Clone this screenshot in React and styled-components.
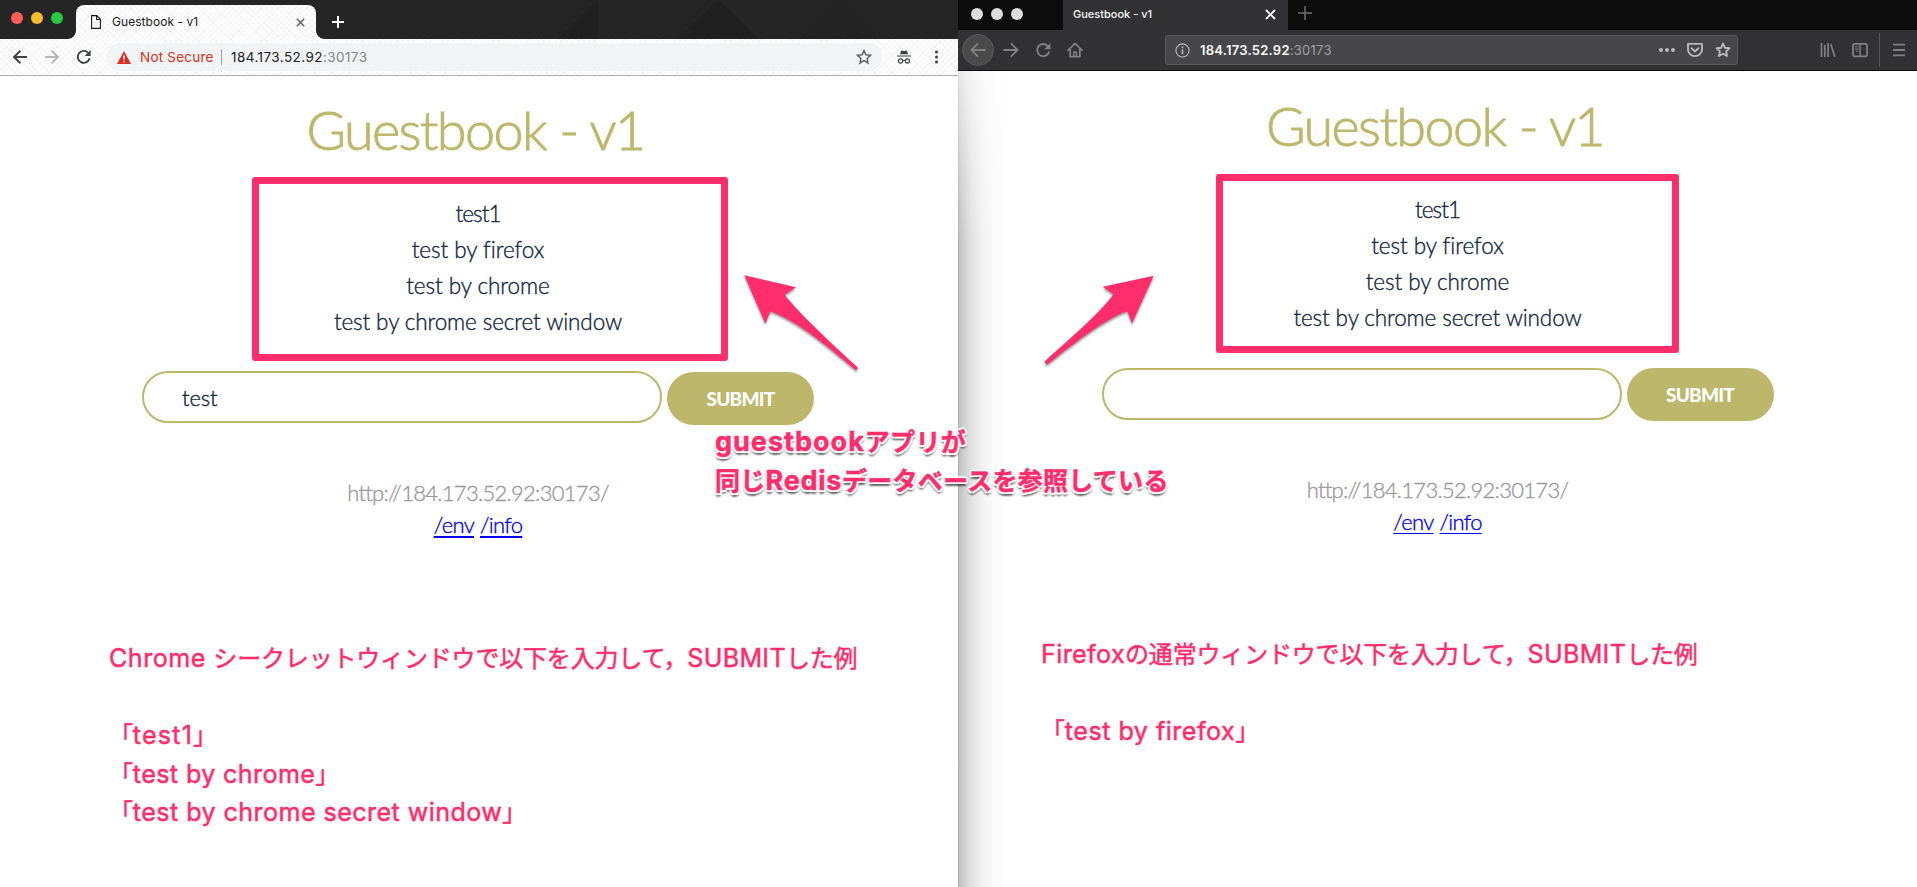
import React from 'react';
import styled, { createGlobalStyle } from 'styled-components';

const PINK = '#ff2d6c';
const OLIVE = '#bdb76b';
const UI = 'Inter, Roboto, "Liberation Sans", sans-serif';
const BODY = 'Lato, "Open Sans", sans-serif';
const JP = 'Inter, "Noto Sans CJK JP", sans-serif';

const GlobalStyle = createGlobalStyle`
  * { box-sizing: border-box; }
  body { margin: 0; background: #fff; overflow: hidden; }
`;

/* ---------- desktop ---------- */

const Desktop = styled.main`
  position: relative;
  display: flex;
  width: 1917px;
  height: 887px;
  overflow: hidden;
`;

const ChromeWindow = styled.section`
  display: flex;
  flex-direction: column;
  width: 958px;
  background: #fff;
`;

const FirefoxWindow = styled.section`
  display: flex;
  flex-direction: column;
  width: 959px;
  background: #fff;
`;

const Icon = styled.svg`
  display: block;
  flex: none;
  fill: none;
  stroke: currentColor;
  color: ${(p) => p.$color || 'inherit'};
`;

const Light = styled.i`
  width: 12px;
  height: 12px;
  border-radius: 50%;
  background: ${(p) => p.$color};
`;

/* ---------- Chrome ---------- */

const hatch = `
  repeating-linear-gradient(45deg, rgba(0,0,0,.035) 0 1px, transparent 1px 4px),
  repeating-linear-gradient(-45deg, rgba(0,0,0,.035) 0 1px, transparent 1px 4px),
  #fff`;

const ChromeTabStrip = styled.header`
  position: relative;
  display: flex;
  height: 39px;
  padding-left: 11px;
  background: #252525;
`;

const StripFacets = styled.svg`
  position: absolute;
  left: 480px;
  top: 0;
`;

const ChromeLights = styled.div`
  display: flex;
  gap: 8px;
  width: 65px;
  padding-top: 12px;
`;

const ChromeTab = styled.div`
  position: relative;
  display: flex;
  align-items: center;
  width: 240px;
  height: 34px;
  margin-top: 5px;
  padding: 0 11px 0 15px;
  border-radius: 8px 8px 0 0;
  background: ${hatch};
  color: #1b1b1c;
  font: 400 12px/16px ${UI};
  letter-spacing: 0.05px;

  &::before,
  &::after {
    content: '';
    position: absolute;
    bottom: 0;
    width: 8px;
    height: 8px;
  }
  &::before {
    left: -8px;
    background: radial-gradient(circle at 0 0, transparent 7.5px, #fafafa 8px);
  }
  &::after {
    right: -8px;
    background: radial-gradient(circle at 100% 0, transparent 7.5px, #fafafa 8px);
  }
`;

const TabTitle = styled.span`
  flex: 1;
  margin-left: ${(p) => p.$gap || 0}px;
  white-space: nowrap;
`;

const ChromeNewTab = styled.div`
  margin: 16px 0 0 16px;
  color: #fff;
`;

const ChromeToolbar = styled.div`
  display: flex;
  align-items: center;
  height: 37px;
  padding-left: 12px;
  border-bottom: 1px solid #aeaeae;
  background: ${hatch};
  color: #3c4043;
`;

const ChromeNav = styled.div`
  display: flex;
  gap: 16px;
  width: 94px;
`;

const Omnibox = styled.div`
  display: flex;
  align-items: center;
  width: 776px;
  height: 28px;
  padding: 0 10px 0 11px;
  border-radius: 14px;
  background: #f1f3f4;
  color: #202124;
  font: 400 13.5px/28px ${UI};
`;

const NotSecure = styled.span`
  width: 81px;
  margin-left: 9px;
  color: #d93025;
  letter-spacing: 0.22px;
`;

const Divider = styled.i`
  width: 1px;
  height: ${(p) => p.$h}px;
  background: ${(p) => p.$color};
`;

const Address = styled.span`
  flex: 1;
  margin-left: ${(p) => p.$gap}px;
  letter-spacing: ${(p) => p.$track}px;
  font-weight: ${(p) => p.$weight || 400};
`;

const Port = styled.span`
  color: ${(p) => p.$color};
  font-weight: 400;
`;

const ChromeActions = styled.div`
  display: flex;
  align-items: center;
  gap: 20px;
  margin-left: 15px;
`;

/* ---------- Firefox ---------- */

const FirefoxTabStrip = styled.header`
  display: flex;
  height: 30px;
  background: #0c0c0d;
`;

const FirefoxLights = styled.div`
  display: flex;
  gap: 8px;
  width: 105px;
  padding: 8px 0 0 13px;
`;

const FirefoxTab = styled.div`
  display: flex;
  align-items: center;
  width: 225px;
  padding: 0 12px 2px 10px;
  background: #323234;
  color: #f9f9fa;
  font: 500 11px/16px ${UI};
`;

const FirefoxNewTab = styled.div`
  padding: 6px 0 0 10px;
  color: #6f6f70;
`;

const FirefoxToolbar = styled.div`
  display: flex;
  align-items: center;
  height: 41px;
  padding-left: 4px;
  border-bottom: 1px solid #0c0c0d;
  background: #323234;
  color: #818182;
`;

const FirefoxNav = styled.div`
  display: flex;
  align-items: center;
  flex: none;
  gap: 16px;
  width: 203px;
`;

const BackButton = styled.div`
  display: flex;
  align-items: center;
  justify-content: center;
  width: 32px;
  height: 32px;
  margin-right: -7px;
  border: 1px solid #5a5a5b;
  border-radius: 50%;
  background: #4a4a4b;
`;

const UrlBar = styled.div`
  display: flex;
  align-items: center;
  flex: none;
  width: 573px;
  height: 30px;
  padding: 0 6px 0 9px;
  border: 1px solid #5b5b5d;
  border-radius: 3px;
  background: #474749;
  color: #f9f9fa;
  font: 600 13px/28px ${UI};
`;

const UrlActions = styled.div`
  display: flex;
  align-items: center;
  gap: 12px;
  color: #b9b9ba;
`;

const FirefoxTools = styled.div`
  display: flex;
  align-items: center;
  flex: none;
  gap: 16px;
  width: 141px;
  padding-left: 82px;
`;

/* ---------- Guestbook page ---------- */

const Page = styled.article`
  flex: 1;
  display: flex;
  flex-direction: column;
  align-items: center;
  padding-top: ${(p) => p.$top}px;
  padding-right: ${(p) => (p.$shaded ? 0 : 2)}px;
  background: ${(p) =>
    p.$shaded
      ? `linear-gradient(180deg, rgba(255,255,255,.6) 0, rgba(255,255,255,0) 170px) 0 0 / 48px 100% no-repeat,
         linear-gradient(90deg, #a6a6a6 0, #bfbfbf 1px, #d0d0d0 6px, #e3e3e3 14px, #f1f1f1 24px, #fafafa 35px, #fff 48px)`
      : '#fff'};
  color: #12263a;
  font: 300 22.5px/36px ${BODY};
`;

const Title = styled.h1`
  margin: 0 5px 0 0;
  color: ${OLIVE};
  font: 300 54px/65px ${BODY};
  letter-spacing: -1.6px;
  -webkit-text-stroke: 0.9px ${OLIVE};
`;

const Entries = styled.ul`
  display: flex;
  flex-direction: column;
  align-items: center;
  margin: ${(p) => p.$top}px 0 ${(p) => p.$bottom}px;
  padding: 0;
  list-style: none;
  -webkit-text-stroke: 0.35px #12263a;
`;

const Entry = styled.li`
  letter-spacing: ${(p) => p.$track}px;
`;

const Form = styled.div`
  display: flex;
  align-items: flex-start;
  gap: 5px;
  height: 54px;
`;

const Field = styled.div`
  width: 520px;
  height: 52px;
  padding-left: 38px;
  border: 2px solid ${OLIVE};
  border-radius: 26px;
  font-size: 22px;
  line-height: 49px;
  letter-spacing: -0.1px;
  -webkit-text-stroke: 0.4px #12263a;
`;

const Submit = styled.div`
  width: 147px;
  height: 53px;
  margin-top: ${(p) => p.$drop}px;
  border-radius: 27px;
  background: ${OLIVE};
  color: #fff;
  font: 900 19px/53px ${BODY};
  letter-spacing: -0.76px;
  text-align: center;
`;

const Host = styled.p`
  margin: 52px 0 0;
  color: #999;
  font-size: 22px;
  line-height: 32px;
  letter-spacing: -0.7px;
  -webkit-text-stroke: 0.35px #999;
`;

const Links = styled.nav`
  display: flex;
  gap: 6px;
  font-size: 22px;
  line-height: 32px;
`;

const PageLink = styled.span`
  color: #0000ee;
  letter-spacing: -0.7px;
  text-decoration: underline;
  text-decoration-thickness: ${(p) => p.$line}px;
  text-underline-offset: 3px;
  text-decoration-skip-ink: none;
  -webkit-text-stroke: 0.35px #0000ee;
`;

const Notes = styled.div`
  align-self: flex-start;
  margin: ${(p) => p.$top}px 0 0 ${(p) => p.$left}px;
  color: ${PINK};
  font: 400 24px/38.6px ${JP};
  letter-spacing: -0.18px;
  white-space: pre;
  -webkit-text-stroke: 0.5px ${PINK};
`;

const Line = styled.div`
  height: 1lh;
`;

const Latin = styled.span`
  font-size: 1.045em;
  letter-spacing: ${(p) => p.$track}px;
`;

/* ---------- annotations drawn over both windows ---------- */

const Highlight = styled.div`
  position: absolute;
  left: ${(p) => p.$x}px;
  top: ${(p) => p.$y}px;
  width: ${(p) => p.$w}px;
  height: ${(p) => p.$h}px;
  border: 7px solid ${PINK};
  border-radius: 3px;
`;

const Arrows = styled.svg`
  position: absolute;
  left: 740px;
  top: 270px;
  filter: drop-shadow(0 2px 1px rgba(0, 0, 0, 0.4));
`;

const Callout = styled.div`
  position: absolute;
  left: 715px;
  top: 422px;
  color: ${PINK};
  font: 700 25px/39.3px ${JP};
  letter-spacing: 0.28px;
  white-space: pre;
  -webkit-text-stroke: 0.5px ${PINK};
  text-shadow:
    2px 0 #fff, -2px 0 #fff, 0 2px #fff, 0 -2px #fff,
    1.5px 1.5px #fff, -1.5px 1.5px #fff, 1.5px -1.5px #fff, -1.5px -1.5px #fff,
    0 4px 2px rgba(0, 0, 0, 0.5), 2px 3px 2px rgba(0, 0, 0, 0.2), -2px 3px 2px rgba(0, 0, 0, 0.2);

  ${Latin} {
    font-size: 27px;
  }
`;

const entries = [
  ['test1', -0.9],
  ['test by firefox', -0.05],
  ['test by chrome', -0.07],
  ['test by chrome secret window', -0.12],
];

function Guestbook({ top, listTop, listBottom, drop, value, line, shaded, children }) {
  return (
    <Page $top={top} $shaded={shaded}>
      <Title>Guestbook - v1</Title>
      <Entries $top={listTop} $bottom={listBottom}>
        {entries.map(([text, track]) => (
          <Entry key={text} $track={track}>{text}</Entry>
        ))}
      </Entries>
      <Form>
        <Field>{value}</Field>
        <Submit $drop={drop}>SUBMIT</Submit>
      </Form>
      <Host>http://184.173.52.92:30173/</Host>
      <Links>
        <PageLink $line={line}>/env</PageLink>
        <PageLink $line={line}>/info</PageLink>
      </Links>
      {children}
    </Page>
  );
}

const STAR = 'M8 1.6l1.9 4.2 4.6.5-3.4 3.1.9 4.6L8 11.7 4 14l.9-4.6L1.5 6.3l4.6-.5z';

function ChromeBrowser() {
  return (
    <ChromeWindow>
      <ChromeTabStrip>
        <StripFacets width="478" height="39" stroke="none">
          <path d="M78 39L117 0h1v39zM197 39L238 0l40 39z" fill="#202020" />
          <path d="M320 39L360 0l40 39z" fill="#232323" />
        </StripFacets>
        <ChromeLights>
          <Light $color="#ff5f57" />
          <Light $color="#febc2e" />
          <Light $color="#28c840" />
        </ChromeLights>
        <ChromeTab>
          <Icon width="10" height="14" viewBox="0 0 10 14" $color="#1b1b1c">
            <path d="M.6.6h5.2l3.6 3.7v9.1H.6zM5.6.8v3.7h3.7" strokeWidth="1.1" />
          </Icon>
          <TabTitle $gap={11}>Guestbook - v1</TabTitle>
          <Icon width="9" height="9" viewBox="0 0 9 9" $color="#5f6368">
            <path d="M.8.8l7.4 7.4M8.2.8L.8 8.2" strokeWidth="1.5" />
          </Icon>
        </ChromeTab>
        <ChromeNewTab>
          <Icon width="12" height="12" viewBox="0 0 12 12">
            <path d="M6 0v12M0 6h12" strokeWidth="2" />
          </Icon>
        </ChromeNewTab>
      </ChromeTabStrip>

      <ChromeToolbar>
        <ChromeNav>
          <Icon width="16" height="16" viewBox="0 0 16 16">
            <path d="M15 8H2.4M8.4 1.8L2 8l6.4 6.2" strokeWidth="1.9" />
          </Icon>
          <Icon width="16" height="16" viewBox="0 0 16 16" $color="#b4b6b8">
            <path d="M1 8h12.6M7.6 1.8L14 8l-6.4 6.2" strokeWidth="1.9" />
          </Icon>
          <Icon width="16" height="16" viewBox="0 0 16 16">
            <path d="M13.6 9.2A6 6 0 1 1 12 3.6" strokeWidth="1.9" />
            <path d="M14.6 1v6H8.6z" fill="currentColor" stroke="none" />
          </Icon>
        </ChromeNav>
        <Omnibox>
          <Icon width="14" height="13" viewBox="0 0 14 13" $color="#d93025">
            <path d="M7 0l7 13H0z" fill="currentColor" stroke="none" />
            <path d="M7 4.6v4M7 9.7v1.6" stroke="#fff" strokeWidth="1.5" />
          </Icon>
          <NotSecure>Not Secure</NotSecure>
          <Divider $h={16} $color="#a0a3a6" />
          <Address $gap={9} $track={0.43}>
            184.173.52.92<Port $color="#80868b">:30173</Port>
          </Address>
          <Icon width="16" height="16" viewBox="0 0 16 16" $color="#5f6368">
            <path d={STAR} strokeWidth="1.5" />
          </Icon>
        </Omnibox>
        <ChromeActions>
          <Icon width="14" height="14" viewBox="0 0 14 14">
            <path d="M4.2.4L7 1l2.8-.6L11 4.2H3zM0 5.4h14v1.1H0z" fill="currentColor" stroke="none" />
            <circle cx="3.6" cy="11" r="2.1" strokeWidth="1.1" />
            <circle cx="10.4" cy="11" r="2.1" strokeWidth="1.1" />
            <path d="M5.6 10.6q1.4-.8 2.8 0" strokeWidth="1" />
          </Icon>
          <Icon width="14" height="16" viewBox="0 0 14 16">
            <g fill="currentColor" stroke="none">
              <circle cx="5.5" cy="3" r="1.5" />
              <circle cx="5.5" cy="8" r="1.5" />
              <circle cx="5.5" cy="13" r="1.5" />
            </g>
          </Icon>
        </ChromeActions>
      </ChromeToolbar>

      <Guestbook top={21} listTop={34} listBottom={31} drop={1} value="test" line={2}>
        <Notes $top={98} $left={109}>
          <Line>
            <Latin $track={0.5}>Chrome </Latin>シークレットウィンドウで以下を入力して，<Latin $track={0.3}>SUBMIT</Latin>した例
          </Line>
          <Line />
          <Line>「<Latin $track={1.2}>test1</Latin>」</Line>
          <Line>「<Latin $track={0.4}>test by chrome</Latin>」</Line>
          <Line>「<Latin $track={0.45}>test by chrome secret window</Latin>」</Line>
        </Notes>
      </Guestbook>
    </ChromeWindow>
  );
}

function FirefoxBrowser() {
  return (
    <FirefoxWindow>
      <FirefoxTabStrip>
        <FirefoxLights>
          <Light $color="#dcdcdc" />
          <Light $color="#dcdcdc" />
          <Light $color="#dcdcdc" />
        </FirefoxLights>
        <FirefoxTab>
          <TabTitle>Guestbook - v1</TabTitle>
          <Icon width="11" height="11" viewBox="0 0 11 11">
            <path d="M1 1l9 9M10 1l-9 9" strokeWidth="1.8" />
          </Icon>
        </FirefoxTab>
        <FirefoxNewTab>
          <Icon width="14" height="14" viewBox="0 0 14 14">
            <path d="M7 0v14M0 7h14" strokeWidth="1.5" />
          </Icon>
        </FirefoxNewTab>
      </FirefoxTabStrip>

      <FirefoxToolbar>
        <FirefoxNav>
          <BackButton>
            <Icon width="16" height="16" viewBox="0 0 16 16">
              <path d="M15 8H1.6M7.6 1.8L1.4 8l6.2 6.2" strokeWidth="1.8" strokeLinecap="round" strokeLinejoin="round" />
            </Icon>
          </BackButton>
          <Icon width="16" height="16" viewBox="0 0 16 16">
            <path d="M1 8h13.4M8.4 1.8L14.6 8l-6.2 6.2" strokeWidth="1.8" strokeLinecap="round" strokeLinejoin="round" />
          </Icon>
          <Icon width="16" height="16" viewBox="0 0 16 16">
            <path d="M14 10.2A6.1 6.1 0 1 1 12.6 3.8" strokeWidth="1.9" strokeLinecap="round" />
            <path d="M15.4 1v6.2H9.2z" fill="currentColor" stroke="none" />
          </Icon>
          <Icon width="16" height="16" viewBox="0 0 16 16">
            <path d="M1 8.4L8 1.4l7 7M3.2 7.5v7.2h9.6V7.5" strokeWidth="1.8" strokeLinecap="round" strokeLinejoin="round" />
            <path d="M6.8 14V10h2.6v4" strokeWidth="1.5" />
          </Icon>
        </FirefoxNav>
        <UrlBar>
          <Icon width="15" height="15" viewBox="0 0 15 15" $color="#b9b9ba">
            <circle cx="7.5" cy="7.5" r="6.6" strokeWidth="1.1" />
            <path d="M7.5 6.4v4.8M7.5 3.6v1.7" strokeWidth="1.6" />
          </Icon>
          <Address $gap={10} $track={0.25} $weight={600}>
            184.173.52.92<Port $color="#a0a0a2">:30173</Port>
          </Address>
          <UrlActions>
            <Icon width="16" height="16" viewBox="0 0 16 16">
              <g fill="currentColor" stroke="none">
                <circle cx="2" cy="8" r="2" />
                <circle cx="8" cy="8" r="2" />
                <circle cx="14" cy="8" r="2" />
              </g>
            </Icon>
            <Icon width="16" height="16" viewBox="0 0 16 16">
              <path d="M1 1.9h14v5.6a7 6.6 0 0 1-14 0z" strokeWidth="1.9" strokeLinejoin="round" />
              <path d="M4.6 6.2L8 9.4l3.4-3.2" strokeWidth="1.9" strokeLinecap="round" />
            </Icon>
            <Icon width="16" height="16" viewBox="0 0 16 16">
              <path d={STAR} strokeWidth="1.9" strokeLinejoin="round" />
            </Icon>
          </UrlActions>
        </UrlBar>
        <FirefoxTools>
          <Icon width="16" height="16" viewBox="0 0 16 16">
            <path d="M1.5 1v14M4.8 3v12M8.1 1v14M10.8 2.2l4 12.6" strokeWidth="1.7" />
          </Icon>
          <Icon width="16" height="16" viewBox="0 0 16 16">
            <rect x="1" y="1.8" width="14" height="12.6" rx="1.8" strokeWidth="1.8" />
            <path d="M8 2v12" strokeWidth="1.4" />
            <path d="M3 4.8h3.4M3 7h3.4M4 9.2h2.4" strokeWidth="1" />
          </Icon>
        </FirefoxTools>
        <Divider $h={34} $color="#58585a" />
        <Icon width="37" height="16" viewBox="-13 0 37 16">
          <path d="M0 2.6h12M0 8h12M0 13.4h12" strokeWidth="1.8" />
        </Icon>
      </FirefoxToolbar>

      <Guestbook top={22} listTop={34} listBottom={32} drop={0} value="" line={1} shaded>
        <Notes $top={97} $left={83}>
          <Line>
            <Latin $track={0.4}>Firefox</Latin>の通常ウィンドウで以下を入力して，<Latin $track={0.3}>SUBMIT</Latin>した例
          </Line>
          <Line />
          <Line>「<Latin $track={0.5}>test by firefox</Latin>」</Line>
        </Notes>
      </Guestbook>
    </FirefoxWindow>
  );
}

export default function App() {
  return (
    <>
      <GlobalStyle />
      <Desktop>
        <ChromeBrowser />
        <FirefoxBrowser />
        <Highlight $x={252} $y={177} $w={476} $h={184} />
        <Highlight $x={1216} $y={174} $w={463} $h={179} />
        <Arrows width="420" height="110" viewBox="740 270 420 110" fill={PINK}>
          <path d="M744.3 275.3L796 287.3L784.7 294.7C798 312 830 342 857.3 367A1.8 1.8 0 0 1 855 369.6C825 344 795 320 770.3 311.3L765.3 323.5Z" />
          <path d="M1153.7 275.7L1132 323.5L1127.3 311.3C1105 319 1076 342 1048.4 363.6A2 2 0 0 1 1045.6 360.6C1072 337 1102 311 1113.3 294.3L1102.7 286.7Z" />
        </Arrows>
        <Callout>
          <Line><Latin $track={1}>guestbook</Latin>アプリが</Line>
          <Line>同じ<Latin $track={0.7}>Redis</Latin>データベースを参照している</Line>
        </Callout>
      </Desktop>
    </>
  );
}
